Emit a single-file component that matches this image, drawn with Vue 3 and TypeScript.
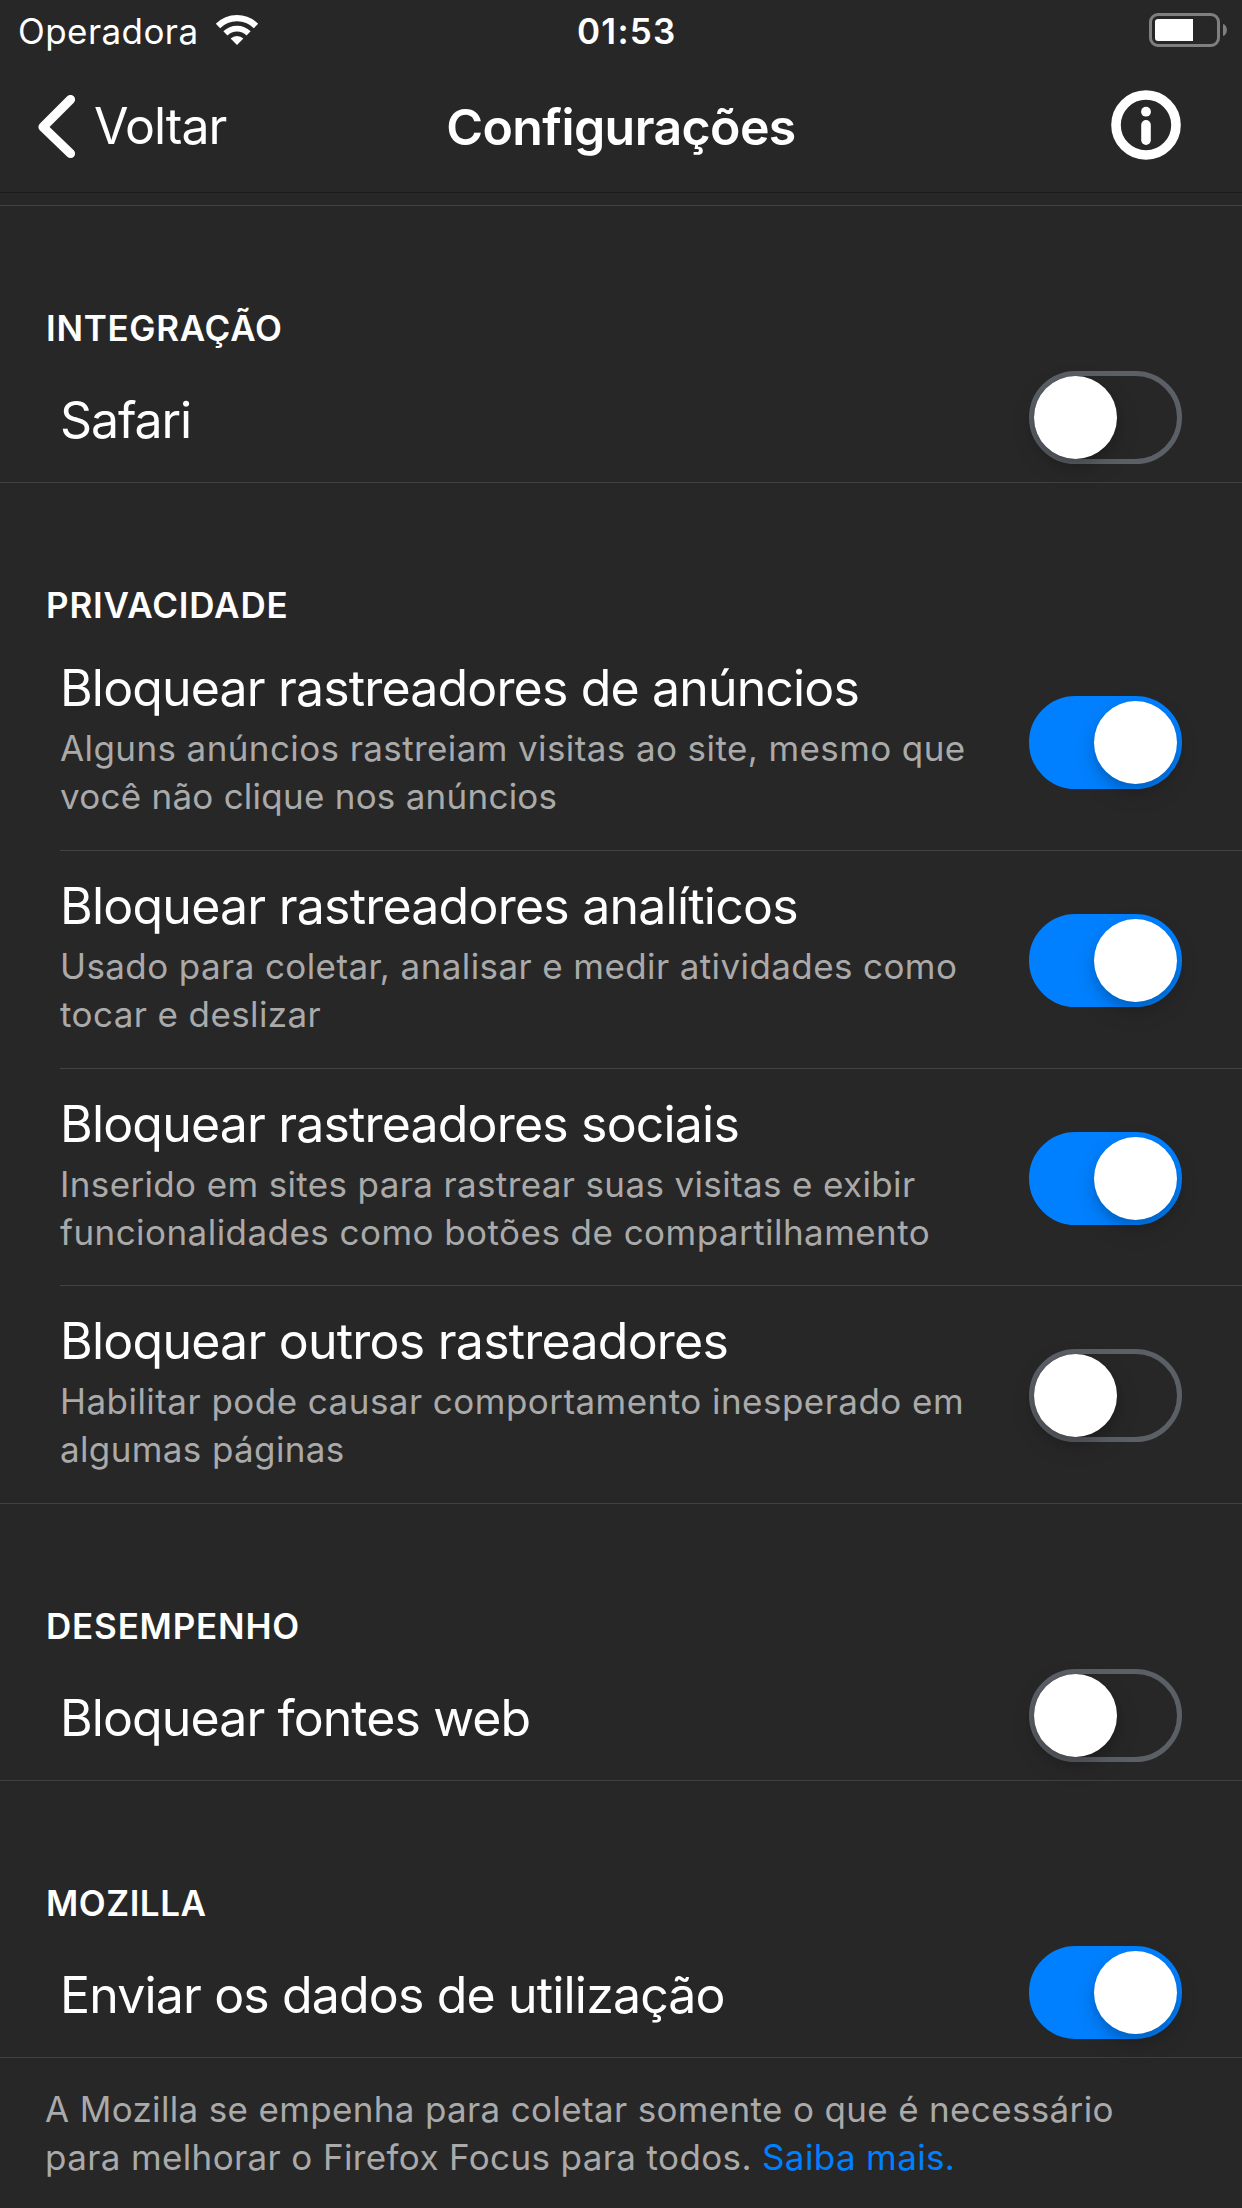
<script setup lang="ts">
import { ref } from 'vue'

interface Line {
  text: string
  tracking: number
}

interface Setting extends Line {
  id: string
  details?: Line[]
  on: boolean
}

interface Section extends Line {
  id: string
  settings: Setting[]
}

const sections = ref<Section[]>([
  {
    id: 'integration',
    text: 'INTEGRAÇÃO',
    tracking: 0.7,
    settings: [{ id: 'safari', text: 'Safari', tracking: -1.1, on: false }],
  },
  {
    id: 'privacy',
    text: 'PRIVACIDADE',
    tracking: 0.84,
    settings: [
      {
        id: 'ads',
        text: 'Bloquear rastreadores de anúncios',
        tracking: -0.84,
        details: [
          { text: 'Alguns anúncios rastreiam visitas ao site, mesmo que', tracking: 0.4 },
          { text: 'você não clique nos anúncios', tracking: 0.25 },
        ],
        on: true,
      },
      {
        id: 'analytics',
        text: 'Bloquear rastreadores analíticos',
        tracking: -0.77,
        details: [
          { text: 'Usado para coletar, analisar e medir atividades como', tracking: 0.4 },
          { text: 'tocar e deslizar', tracking: 0.4 },
        ],
        on: true,
      },
      {
        id: 'social',
        text: 'Bloquear rastreadores sociais',
        tracking: -0.82,
        details: [
          { text: 'Inserido em sites para rastrear suas visitas e exibir', tracking: 0.36 },
          { text: 'funcionalidades como botões de compartilhamento', tracking: 0.45 },
        ],
        on: true,
      },
      {
        id: 'other',
        text: 'Bloquear outros rastreadores',
        tracking: -0.76,
        details: [
          { text: 'Habilitar pode causar comportamento inesperado em', tracking: 0.46 },
          { text: 'algumas páginas', tracking: 0.37 },
        ],
        on: false,
      },
    ],
  },
  {
    id: 'performance',
    text: 'DESEMPENHO',
    tracking: 0.8,
    settings: [{ id: 'fonts', text: 'Bloquear fontes web', tracking: -0.9, on: false }],
  },
  {
    id: 'mozilla',
    text: 'MOZILLA',
    tracking: 0.54,
    settings: [{ id: 'usage', text: 'Enviar os dados de utilização', tracking: -0.84, on: true }],
  },
])
</script>

<template>
  <main class="screen">
    <div class="status-bar">
      <div class="carrier">
        <span class="carrier-name">Operadora</span>
        <svg class="wifi" width="44" height="32" viewBox="0 0 44 32">
          <path d="M3 12 A26.9 26.9 0 0 1 41 12" fill="none" stroke="#fff" stroke-width="6.2" />
          <path d="M10.4 19.4 A16.4 16.4 0 0 1 33.6 19.4" fill="none" stroke="#fff" stroke-width="5.8" />
          <path d="M22 31 L15.6 24.6 A9 9 0 0 1 28.4 24.6 Z" fill="#fff" />
        </svg>
      </div>
      <span class="time">01:53</span>
      <svg class="battery" width="79" height="34" viewBox="0 0 79 34">
        <rect x="1.5" y="1.5" width="68" height="31" rx="7.5" fill="none" stroke="#7f7f7f" stroke-width="3" />
        <path d="M44 6 H9 A3 3 0 0 0 6 9 V25 A3 3 0 0 0 9 28 H44 Z" fill="#fff" />
        <path d="M74 11 C79.2 12.2 79.2 21.8 74 23 Z" fill="#7f7f7f" />
      </svg>
    </div>

    <header class="nav-bar">
      <div class="back">
        <svg class="chevron" width="38" height="64" viewBox="0 0 38 64">
          <path d="M32.5 4.5 L5 32 L32.5 58.5" fill="none" stroke="#fff" stroke-width="9.2" stroke-linecap="round" stroke-linejoin="round" />
        </svg>
        <span class="back-label">Voltar</span>
      </div>
      <h1 class="title">Configurações</h1>
      <svg class="info" width="70" height="70" viewBox="0 0 70 70">
        <circle cx="35" cy="35" r="30" fill="none" stroke="#fff" stroke-width="9.6" />
        <circle cx="35" cy="21.7" r="4.9" fill="#fff" />
        <path d="M35 34.8 V50.2" stroke="#fff" stroke-width="9.6" stroke-linecap="round" />
      </svg>
    </header>

    <div class="scroll-edge"></div>

    <section v-for="section in sections" :key="section.id" class="section">
      <h2 class="section-title" :style="{ letterSpacing: section.tracking + 'px' }">{{ section.text }}</h2>
      <div class="rows" :class="{ multi: section.settings.length > 1 }">
        <div
          v-for="setting in section.settings"
          :key="setting.id"
          class="row"
          :class="[{ detailed: setting.details }, setting.id]"
        >
          <div class="row-text">
            <div class="row-title" :style="{ letterSpacing: setting.tracking + 'px' }">{{ setting.text }}</div>
            <p v-if="setting.details" class="row-details">
              <span
                v-for="line in setting.details"
                :key="line.text"
                class="line"
                :style="{ letterSpacing: line.tracking + 'px' }"
              >{{ line.text }}</span>
            </p>
          </div>
          <button
            class="switch"
            :class="{ on: setting.on }"
            role="switch"
            :aria-checked="setting.on"
            :aria-label="setting.text"
            @click="setting.on = !setting.on"
          >
            <span class="knob"></span>
          </button>
        </div>
      </div>
    </section>

    <footer class="footnote">
      <span class="line first">A Mozilla se empenha para coletar somente o que é necessário</span>
      <span class="line">para melhorar o Firefox Focus para todos. <a class="link">Saiba mais.</a></span>
    </footer>
  </main>
</template>

<style>
body {
  margin: 0;
  background: #272727;
}
</style>

<style scoped>
.screen {
  width: 1242px;
  height: 2208px;
  overflow: hidden;
  background: #272727;
  color: #fff;
  font-family: Inter, "Liberation Sans", sans-serif;
}

.status-bar {
  display: flex;
  align-items: flex-start;
  height: 60px;
  box-sizing: border-box;
  padding: 10px 14px 0 18px;
  font-size: 35px;
  line-height: 42px;
}

.carrier {
  display: flex;
  width: 559px;
}

.carrier-name {
  width: 197px;
  letter-spacing: 0.43px;
}

.wifi {
  margin-top: 4px;
}

.time {
  font-weight: 600;
  letter-spacing: 1.25px;
}

.battery {
  margin: 3px 0 0 auto;
}

.nav-bar {
  display: grid;
  grid-template-columns: 1fr auto 1fr;
  align-items: start;
  box-sizing: border-box;
  height: 133px;
  border-bottom: 1px solid #1b1b1b;
  font-size: 50px;
  line-height: 60px;
}

.back {
  display: flex;
  padding-left: 38px;
}

.chevron {
  margin-top: 35px;
}

.back-label {
  margin: 36px 0 0 18px;
  letter-spacing: -1px;
}

.title {
  margin: 37px 0 0;
  font-size: 50px;
  font-weight: 600;
  letter-spacing: -0.6px;
}

.info {
  justify-self: end;
  margin: 30px 61px 0 0;
}

.scroll-edge {
  height: 12px;
  border-bottom: 1px solid #424242;
}

.section-title {
  margin: 0;
  padding: 100px 46px 0;
  font-size: 35px;
  font-weight: 600;
  line-height: 44px;
}

.rows {
  border-bottom: 1px solid #404042;
}

.rows.multi {
  padding-top: 6px;
}

.row {
  display: flex;
  justify-content: space-between;
  box-sizing: border-box;
  height: 132px;
  margin-left: 60px;
  padding: 21px 60px 0 0;
}

.row-title {
  margin-top: 19px;
  font-size: 50px;
  line-height: 60px;
  white-space: nowrap;
}

.row.detailed {
  height: 218px;
  padding-top: 25px;
  border-bottom: 1px solid #424242;
}

.row.detailed.social {
  height: 217px;
}

.row.detailed:last-child {
  height: 217px;
  border-bottom: 0;
}

.detailed .row-title {
  margin-top: 0;
}

.row-details {
  margin: 6px 0 0;
  color: #aaa;
  font-size: 35px;
  line-height: 48px;
}

.line {
  display: block;
  white-space: nowrap;
}

.switch {
  flex: none;
  width: 153px;
  height: 93px;
  box-sizing: border-box;
  padding: 0;
  border: 5px solid #5b6067;
  border-radius: 47px;
  background: transparent;
}

.detailed .switch {
  margin-top: 38px;
}

.knob {
  display: block;
  width: 83px;
  height: 83px;
  border-radius: 50%;
  background: #fff;
  box-shadow: 0 9px 24px rgba(0, 0, 0, 0.15), 0 6px 8px rgba(0, 0, 0, 0.12);
}

.switch.on {
  border-color: #0080ff;
  background: #0080ff;
}

.on .knob {
  margin-left: 60px;
}

.footnote {
  padding: 27px 45px 0;
  color: #aaa;
  font-size: 35px;
  line-height: 48px;
  letter-spacing: 0.37px;
}

.first {
  letter-spacing: 0.34px;
}

.link {
  color: #0080ff;
}
</style>
